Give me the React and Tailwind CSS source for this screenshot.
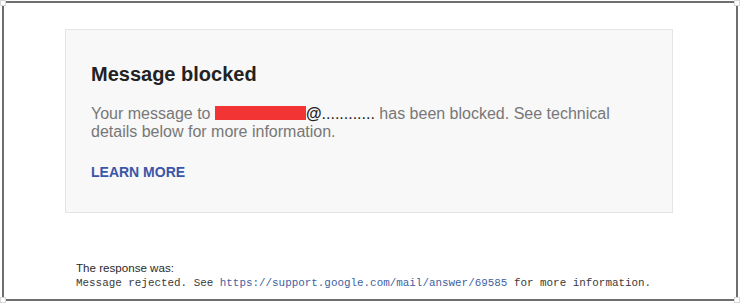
export default function App() {
  return (
    <div className="relative h-[303px] w-[740px] overflow-hidden bg-white" style={{ fontFamily: '"Liberation Sans", Arial, sans-serif' }}>
      <div className="ml-[2px] mt-[1px] h-[300px] w-[736px] border-2 border-[#6f6f6f]">
        <section className="ml-[61px] mt-[26px] h-[184px] w-[608px] border border-[#e4e4e4] bg-[#f8f8f8] pl-[25px] pt-[32px]">
          <h1 className="text-[20px] font-bold leading-[24px] text-[#222]">Message blocked</h1>
          <p className="mt-[19px] w-[540px] text-[16px] leading-[18px] text-[#777]">
            Your message to{' '}
            <span className="inline-block h-[14px] w-[91px] bg-[#f23434] align-[-1px]" />
            <span className="text-[#222]"><span className="font-semibold">@</span>............</span> has been blocked. See technical details below for more information.
          </p>
          <a className="mt-[23px] block text-[14px] font-bold leading-[16px] text-[#3a56a8]" href="#">
            LEARN MORE
          </a>
        </section>
        <div className="ml-[72px] mt-[48px]">
          <div className="text-[11.6px] leading-[14px] text-[#2a2a2a]">The response was:</div>
          <div className="mt-[1px] whitespace-pre text-[10.9px] leading-[14px] text-[#3a3a3a]" style={{ fontFamily: '"Liberation Mono", "DejaVu Sans Mono", monospace' }}>
            Message rejected. See <span className="text-[#3f5fa0]">https://support.google.com/mail/answer/69585</span> for more information.
          </div>
        </div>
      </div>
      <span className="absolute left-0 top-0 h-[6px] w-[6px] border border-[#d8d8d8] bg-white" />
      <span className="absolute right-0 top-0 h-[6px] w-[6px] border border-[#d8d8d8] bg-white" />
      <span className="absolute bottom-0 left-0 h-[6px] w-[6px] border border-[#d8d8d8] bg-white" />
      <span className="absolute bottom-0 right-0 h-[6px] w-[6px] border border-[#d8d8d8] bg-white" />
    </div>
  )
}
